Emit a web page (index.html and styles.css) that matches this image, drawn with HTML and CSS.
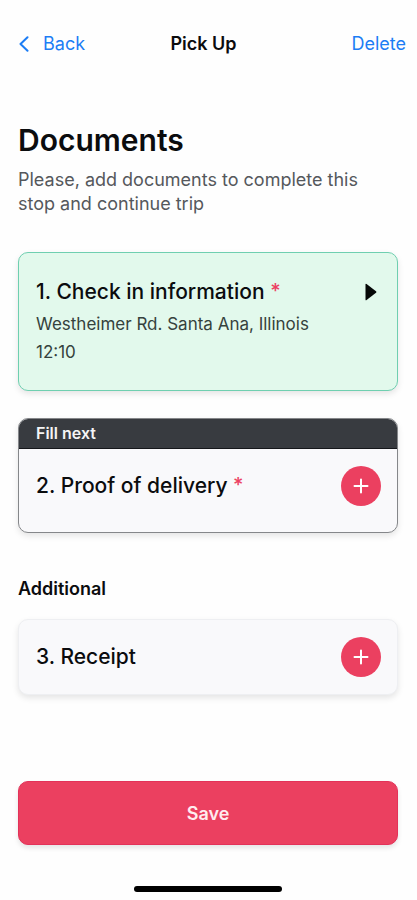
FILE: index.html
```html
<!DOCTYPE html>
<html lang="en">
<head>
    <meta charset="UTF-8">
    <meta name="viewport" content="width=device-width, initial-scale=1.0">
    <title>Pick Up</title>
    <link rel="stylesheet" href="styles.css">
</head>
<body>
    <header class="navbar">
        <a href="#" class="nav-link">
            <svg class="chevron" width="10" height="16" viewBox="0 0 10 16" fill="none" stroke="currentColor" stroke-width="2" stroke-linecap="round" stroke-linejoin="round" aria-hidden="true">
                <path d="M8.5 1.2L1.5 8l7 6.8"/>
            </svg>
            Back
        </a>
        <span class="nav-title">Pick Up</span>
        <a href="#" class="nav-link nav-delete">Delete</a>
    </header>

    <main class="content">
        <h1>Documents</h1>
        <p class="subtitle">Please, add documents to complete this stop and continue trip</p>

        <section class="card card-done">
            <div class="card-body">
                <div class="card-text">
                    <h2>1. Check in information <span class="required">*</span></h2>
                    <p>Westheimer Rd. Santa Ana, Illinois</p>
                    <p>12:10</p>
                </div>
                <button type="button" class="open-button" aria-label="Open check in information">
                    <svg width="12" height="18" viewBox="0 0 12 18" fill="currentColor" aria-hidden="true">
                        <path d="M0.5 1.6Q0.5 0.2 1.6 1L11 8.2Q12 9 11 9.8L1.6 17Q0.5 17.8 0.5 16.4Z"/>
                    </svg>
                </button>
            </div>
        </section>

        <section class="card card-next">
            <div class="card-label">Fill next</div>
            <div class="card-body">
                <h2>2. Proof of delivery <span class="required">*</span></h2>
                <button type="button" class="add-button" aria-label="Add proof of delivery">
                    <svg width="16" height="16" viewBox="0 0 16 16" stroke="currentColor" stroke-width="2" stroke-linecap="round" aria-hidden="true">
                        <path d="M8 1.5v13M1.5 8h13"/>
                    </svg>
                </button>
            </div>
        </section>

        <h3>Additional</h3>

        <section class="card card-plain">
            <div class="card-body">
                <h2>3. Receipt</h2>
                <button type="button" class="add-button" aria-label="Add receipt">
                    <svg width="16" height="16" viewBox="0 0 16 16" stroke="currentColor" stroke-width="2" stroke-linecap="round" aria-hidden="true">
                        <path d="M8 1.5v13M1.5 8h13"/>
                    </svg>
                </button>
            </div>
        </section>
    </main>

    <footer class="footer">
        <button type="button" class="save-button">Save</button>
        <div class="home-indicator"></div>
    </footer>
</body>
</html>
```
FILE: styles.css
```css
* {
    box-sizing: border-box;
}
body {
    font-family: Inter, sans-serif;
    margin: 0;
    min-height: 100vh;
    display: flex;
    flex-direction: column;
    background: #fefefe;
    color: #0b0c0e;
}
h1, h2, h3, p {
    margin: 0;
}
button {
    font-family: inherit;
    border: none;
    padding: 0;
    cursor: pointer;
}
.navbar {
    display: grid;
    grid-template-columns: 1fr auto 1fr;
    align-items: center;
    padding: 32px 11px 0 19px;
}
.nav-link {
    display: flex;
    align-items: center;
    gap: 14px;
    font-size: 18px;
    line-height: 24px;
    color: #1c7df5;
    text-decoration: none;
}
.nav-delete {
    justify-content: flex-end;
}
.nav-title {
    padding-right: 18px;
    font-size: 18px;
    line-height: 24px;
    font-weight: 600;
}
.content {
    padding: 64px 19px 0 18px;
}
h1 {
    font-size: 30px;
    line-height: 40px;
    font-weight: 600;
}
.subtitle {
    margin-top: 8px;
    font-size: 18px;
    line-height: 24px;
    color: #55585c;
}
h2 {
    font-size: 21px;
    line-height: 28px;
    font-weight: 500;
}
h3 {
    margin-top: 44px;
    font-size: 18px;
    line-height: 24px;
    font-weight: 600;
}
.required {
    color: #ec4162;
    font-size: 20px;
    line-height: 20px;
    font-weight: 500;
    vertical-align: 1px;
}
.card {
    border: 1px solid #eeeff2;
    border-radius: 10px;
    background: #f9f9fb;
    box-shadow: 0 3px 6px rgba(0,0,0,0.1);
    overflow: hidden;
}
.card-body {
    display: flex;
    align-items: center;
    justify-content: space-between;
    padding: 17px 16px 17px 17px;
}
.card-done {
    margin-top: 36px;
    border-color: #6fcfb0;
    background: #e2f9ec;
}
.card-done .card-body {
    align-items: flex-start;
    padding: 25px 20px 24px 17px;
}
.card-done p {
    font-size: 17px;
    line-height: 28px;
    color: #35423d;
}
.card-done h2 {
    margin-bottom: 4px;
}
.open-button {
    display: flex;
    align-items: center;
    height: 28px;
    background: none;
    color: #050807;
}
.card-next {
    margin-top: 27px;
    border-color: #85878a;
}
.card-next .card-body {
    padding-bottom: 26px;
}
.card-label {
    padding: 0 17px;
    background: #383b40;
    border-bottom: 1px solid #15171b;
    color: #f4f4f5;
    font-size: 16px;
    line-height: 29px;
    font-weight: 600;
}
.card-plain {
    margin-top: 18px;
}
.add-button {
    display: flex;
    align-items: center;
    justify-content: center;
    width: 40px;
    height: 40px;
    border-radius: 50%;
    background: #eb4060;
    color: #fff;
}
.footer {
    margin-top: auto;
    padding: 0 19px 8px 18px;
}
.save-button {
    display: block;
    width: 100%;
    height: 64px;
    border-radius: 10px;
    background: #eb4060;
    border: 1px solid #e33259;
    box-shadow: 0 3px 5px rgba(0,0,0,0.1);
    color: #ffecef;
    font-size: 18px;
    font-weight: 600;
}
.home-indicator {
    width: 148px;
    height: 6px;
    margin: 41px auto 0;
    border-radius: 3px;
    background: #000;
}
```
